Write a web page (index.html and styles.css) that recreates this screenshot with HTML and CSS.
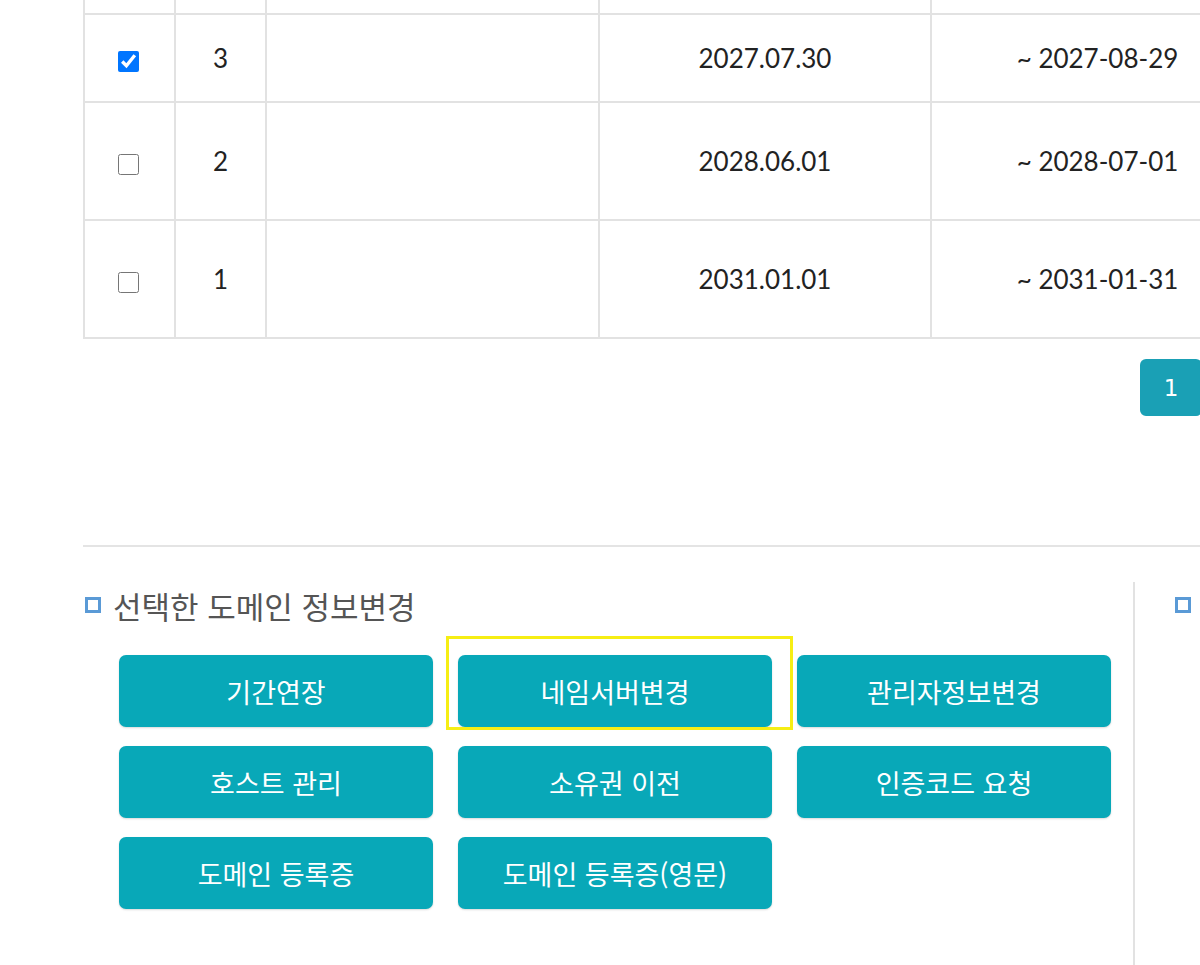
FILE: index.html
```html
<!DOCTYPE html>
<html lang="ko">
<head>
<meta charset="utf-8">
<title>도메인 관리</title>
<link rel="stylesheet" href="styles.css">
</head>
<body>
<div class="page">
  <div class="inner">
  <table class="list">
    <colgroup>
      <col class="c-chk"><col class="c-num"><col class="c-name"><col class="c-date"><col class="c-exp">
    </colgroup>
    <tbody>
      <tr class="row-partial"><td></td><td></td><td></td><td></td><td></td></tr>
      <tr class="row-first">
        <td class="cell-chk"><input type="checkbox" class="chk" checked></td>
        <td>3</td>
        <td></td>
        <td>2027.07.30</td>
        <td>~ 2027-08-29</td>
      </tr>
      <tr class="row">
        <td class="cell-chk"><input type="checkbox" class="chk"></td>
        <td>2</td>
        <td></td>
        <td>2028.06.01</td>
        <td>~ 2028-07-01</td>
      </tr>
      <tr class="row">
        <td class="cell-chk"><input type="checkbox" class="chk"></td>
        <td>1</td>
        <td></td>
        <td>2031.01.01</td>
        <td>~ 2031-01-31</td>
      </tr>
    </tbody>
  </table>

  <div class="pager">
    <a class="page-btn">1</a>
  </div>

  <hr class="divider">

  <div class="sections">
    <div class="panel panel-main">
      <h3 class="title"><span class="sq"></span>선택한 도메인 정보변경</h3>
      <div class="btn-grid">
        <button class="act">기간연장</button>
        <div class="hl-wrap">
          <button class="act">네임서버변경</button>
          <span class="highlight"></span>
        </div>
        <button class="act">관리자정보변경</button>
        <button class="act">호스트 관리</button>
        <button class="act">소유권 이전</button>
        <button class="act">인증코드 요청</button>
        <button class="act">도메인 등록증</button>
        <button class="act">도메인 등록증(영문)</button>
      </div>
    </div>
    <div class="panel panel-side">
      <h3 class="title"><span class="sq"></span></h3>
    </div>
  </div>
  </div>
</div>
</body>
</html>
```

FILE: styles.css
```css
html, body {
  margin: 0;
  padding: 0;
  background: #fff;
  overflow: hidden;
}

body {
  width: 1200px;
  font-family: Lato, "Noto Sans CJK KR", sans-serif;
  color: #222;
}

.page {
  width: 1200px;
  height: 965px;
  overflow: hidden;
}

.inner {
  padding-left: 83px;
  width: 1300px;
}

.list {
  border-collapse: collapse;
  width: 1180px;
  table-layout: fixed;
  font-family: Lato, "Noto Sans CJK KR", sans-serif;
  font-size: 26px;
  color: #222;
}

.c-chk { width: 91px; }
.c-num { width: 91px; }
.c-name { width: 333px; }
.c-date { width: 332px; }
.c-exp { width: 333px; }

.list td {
  border: 2px solid #e2e2e2;
  text-align: center;
  vertical-align: middle;
  padding: 0;
}

.row-partial td {
  border-top: 0;
  height: 13px;
}

.row-first td {
  height: 86px;
}

.row td {
  height: 116px;
}

.chk {
  width: 21px;
  height: 21px;
  margin: 0 2px 0 0;
  vertical-align: middle;
}

.pager {
  display: flex;
  padding-left: 1057px;
  margin-top: 20px;
}

.page-btn {
  display: flex;
  align-items: center;
  justify-content: center;
  width: 62px;
  height: 57px;
  border-radius: 6px;
  background: #1aa0b5;
  color: #fff;
  font-family: "DejaVu Sans", sans-serif;
  font-size: 23px;
}

.divider {
  margin: 129px 0 0 0;
  border: 0;
  border-top: 2px solid #e4e4e4;
  width: 1200px;
}

.sections {
  display: flex;
  margin-top: 35px;
}

.panel-main {
  width: 1050px;
  border-right: 2px solid #e2e2e2;
  min-height: 420px;
}

.panel-side {
  padding-left: 38px;
}

.title {
  display: flex;
  align-items: center;
  margin: 0;
  padding-top: 8px;
  height: 30px;
  font-family: "Noto Sans CJK KR", sans-serif;
  font-weight: 400;
  font-size: 31px;
  color: #555;
}

.sq {
  display: inline-block;
  width: 10px;
  height: 10px;
  border: 3px solid #5a9ad6;
  margin: 0 12px 0 2px;
  flex: none;
}

.btn-grid {
  display: grid;
  grid-template-columns: repeat(3, 314px);
  grid-auto-rows: 72px;
  column-gap: 25px;
  row-gap: 19px;
  padding-left: 36px;
  margin-top: 35px;
}

.act {
  border: 0;
  margin: 0;
  width: 100%;
  height: 100%;
  border-radius: 7px;
  background: #08a8b8;
  color: #fff;
  font-family: "Noto Sans CJK KR", sans-serif;
  font-size: 27px;
  font-weight: 400;
  box-shadow: 0 1px 2px rgba(0, 0, 0, 0.15);
  cursor: pointer;
}

.hl-wrap {
  position: relative;
}

.highlight {
  position: absolute;
  left: -12px;
  top: -19px;
  right: -21px;
  bottom: -3px;
  border: 3px solid #f6ee14;
  pointer-events: none;
}
```
